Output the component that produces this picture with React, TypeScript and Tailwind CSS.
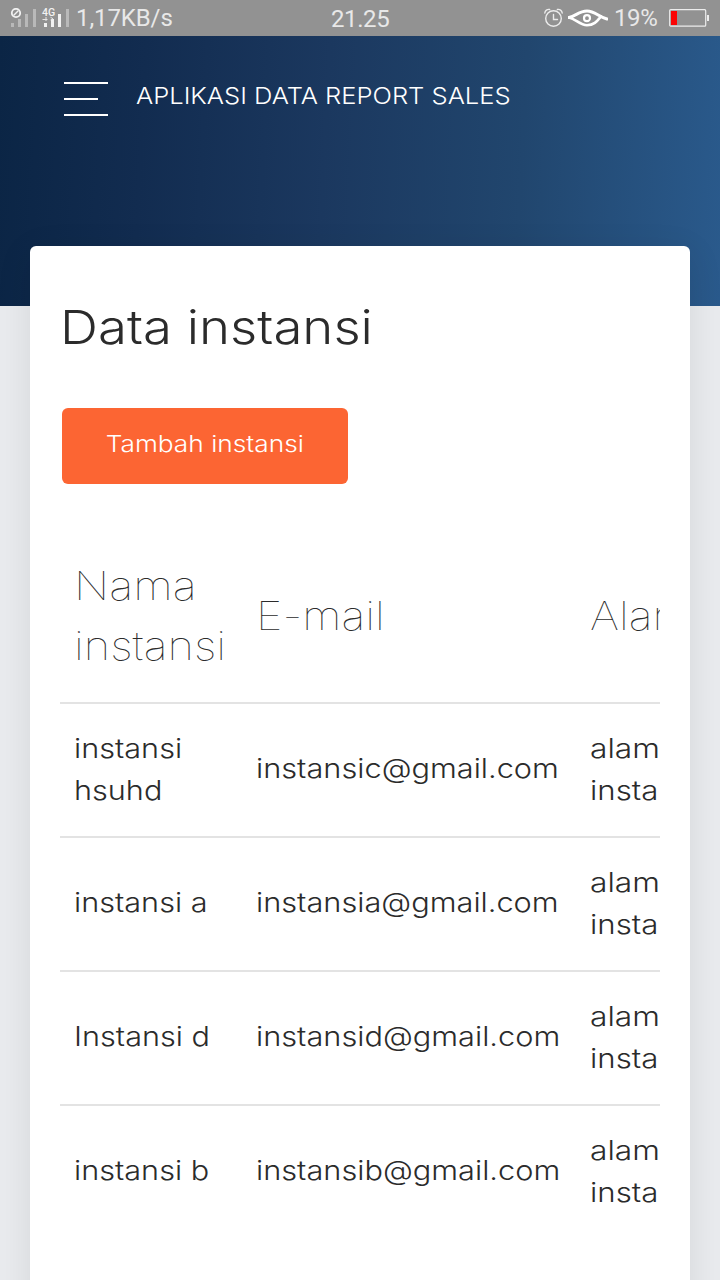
import type { ReactNode } from 'react';

const rows = [
  { name: ['instansi', 'hsuhd'], email: 'instansic@gmail.com' },
  { name: ['instansi a'], email: 'instansia@gmail.com' },
  { name: ['Instansi d'], email: 'instansid@gmail.com' },
  { name: ['instansi b'], email: 'instansib@gmail.com' },
];

function Signals() {
  return (
    <svg width="64" height="20" viewBox="0 0 64 20" className="shrink-0">
      <g fill="#b9b9b9">
        <rect x="1" y="15" width="3" height="4" />
        <rect x="8" y="11" width="3" height="8" />
        <rect x="15" y="6" width="3" height="13" />
        <rect x="23" y="1" width="3" height="18" />
        <rect x="56" y="1" width="3" height="18" />
      </g>
      <circle cx="6" cy="5" r="4.2" fill="none" stroke="#f2f2f2" strokeWidth="1.8" />
      <path d="M3.5 7.5 8.5 2.5" stroke="#f2f2f2" strokeWidth="1.5" />
      <g fill="#f2f2f2">
        <rect x="34" y="15" width="3" height="4" />
        <rect x="41" y="11" width="3" height="8" />
        <rect x="48" y="6" width="3" height="13" />
        <text x="32" y="8.2" fontSize="10.5" fontWeight="500" fontFamily="Roboto, sans-serif">4G</text>
      </g>
      <path d="M36 9v4M32.5 11.5h5M40.5 9.3l2.5 1.4-2.5 1.3" fill="none" stroke="#e5e5e5" strokeWidth="1" />
    </svg>
  );
}

function Alarm() {
  return (
    <svg width="20" height="20" viewBox="0 0 20 20" fill="none" stroke="#ececec" strokeWidth="1.4" strokeLinecap="round" className="shrink-0">
      <circle cx="9.5" cy="10.5" r="7.8" />
      <path d="M9.5 6.500v5h4M.8 5a4 4 0 0 1 4.800-3.500M18.200 5a4 4 0 0 0-4.800-3.500" />
    </svg>
  );
}

function Eye() {
  return (
    <svg width="40" height="18" viewBox="0 0 40 18" fill="none" stroke="#fff" strokeLinecap="round" className="shrink-0">
      <path d="M1 8.500C8 7 11 2 19 2c8 0 11 5.500 20 8" strokeWidth="3" />
      <path d="M1 8.500C8 10 12 16.300 19 16.300c7 0 10-4 14-8.800" strokeWidth="2.600" />
      <circle cx="19" cy="9.200" r="3" strokeWidth="2.200" />
    </svg>
  );
}

function Battery() {
  return (
    <svg width="41" height="20" viewBox="0 0 41 20" className="shrink-0">
      <rect x=".7" y="1.700" width="36" height="16.500" rx="1" fill="none" stroke="#ececec" strokeWidth="1.200" />
      <rect x="2" y="3" width="6" height="14" fill="#fa0505" />
      <rect x="38" y="7" width="2" height="6" fill="#ececec" />
    </svg>
  );
}

function Wide({ children, scale = 'scale-x-[1.134]' }: { children: ReactNode; scale?: string }) {
  return <span className={`block w-max origin-left whitespace-nowrap ${scale}`}>{children}</span>;
}

const cell = 'border-t-2 border-[#e3e3e3] pl-[14px]';

export default function App() {
  return (
    <div className="flex h-[1280px] w-[720px] flex-col overflow-hidden bg-[#e9ebee] font-['Inter',sans-serif] font-light text-[#2b2b2b]">
      <div className="grid h-9 shrink-0 grid-cols-[331px_213px_176px] items-center bg-[#929292] font-['Roboto',sans-serif] text-2xl font-normal text-[#e8e8e8]">
        <div className="flex items-center pl-[10px]">
          <Signals />
          <span className="ml-[2px] whitespace-nowrap tracking-[-0.1px]">1,17KB/s</span>
        </div>
        <span className="pt-px tracking-[-0.4px]">21.25</span>
        <div className="flex items-center">
          <Alarm />
          <div className="ml-[4px] flex"><Eye /></div>
          <span className="ml-[6px] w-[44px] whitespace-nowrap tracking-[-0.4px]">19%</span>
          <div className="ml-[11px] flex"><Battery /></div>
        </div>
      </div>
      <header className="flex h-[270px] shrink-0 items-start bg-[linear-gradient(93deg,#0b2545_0%,#122c50_20%,#1b385f_45%,#21466e_72%,#2a5a8c_100%)] pl-16 pt-[42px]">
        <div className="mt-[4px] flex w-11 flex-col gap-[14px]">
          <span className="h-[2px] w-11 bg-white" />
          <span className="h-[2px] w-[34px] bg-white" />
          <span className="h-[2px] w-11 bg-white" />
        </div>
        <span className="ml-7 origin-left scale-x-[1.11] whitespace-nowrap text-[23px] leading-9 text-white">APLIKASI DATA REPORT SALES</span>
      </header>
      <main className="relative mx-[30px] -mt-[60px] h-[1100px] shrink-0 rounded-md bg-white px-[30px] shadow-[0_8px_36px_rgba(0,0,0,0.09)]">
        <h1 className="w-max origin-left scale-x-[1.122] whitespace-nowrap pt-[45px] text-[47px] leading-[72px]">Data instansi</h1>
        <button className="ml-[2px] mt-[45px] flex h-[76px] w-[286px] items-center justify-center rounded-md bg-[#fc6533] pb-1 text-[23px] font-light text-white">
          <span className="scale-x-[1.142] whitespace-nowrap">Tambah instansi</span>
        </button>
        <div className="mt-[46px] w-[600px] overflow-hidden">
          <table className="w-[860px] table-fixed border-separate border-spacing-0 text-left">
            <colgroup>
              <col className="w-[182px]" />
              <col className="w-[334px]" />
              <col className="w-[344px]" />
            </colgroup>
            <thead>
              <tr className="h-[172px] text-[39px] leading-[60px]">
                <th className="pl-[14px] font-thin">
                  <Wide scale="scale-x-[1.17]">Nama</Wide>
                  <Wide scale="scale-x-[1.16]">instansi</Wide>
                </th>
                <th className="pl-[14px] font-thin"><Wide scale="scale-x-[1.16]">E-mail</Wide></th>
                <th className="pl-[14px] font-thin"><Wide scale="scale-x-[1.16]">Alamat</Wide></th>
              </tr>
            </thead>
            <tbody className="text-[27px] leading-[42px]">
              {rows.map((row) => (
                <tr key={row.email} className="h-[134px]">
                  <td className={`${cell} ${row.name.length > 1 ? 'pb-[24px] pt-[24px]' : 'pb-[24px] pt-[22px]'}`}>
                    {row.name.map((line) => <Wide key={line}>{line}</Wide>)}
                  </td>
                  <td className={`${cell} pb-[24px] pt-[22px]`}><Wide scale="scale-x-[1.138]">{row.email}</Wide></td>
                  <td className={`${cell} pb-[24px] pt-[24px]`}>
                    <Wide scale="scale-x-[1.175]">alamat</Wide>
                    <Wide scale="scale-x-[1.155]">instansi</Wide>
                  </td>
                </tr>
              ))}
            </tbody>
          </table>
        </div>
      </main>
    </div>
  );
}
